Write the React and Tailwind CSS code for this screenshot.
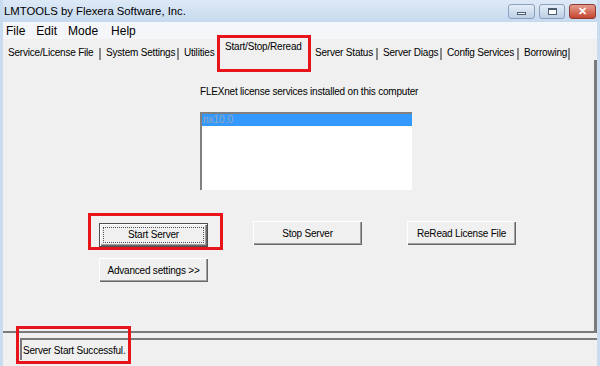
import React from "react";

const tabs = [
  { label: "Service/License File", w: "w-[98px]" },
  { label: "System Settings", w: "w-[78px]" },
  { label: "Utilities", w: "w-[40px]" },
  { label: "Start/Stop/Reread", w: "w-[91px]", active: true },
  { label: "Server Status", w: "w-[68px]" },
  { label: "Server Diags", w: "w-[64px]" },
  { label: "Config Services", w: "w-[77px]" },
  { label: "Borrowing", w: "w-[51px]" },
];

const WinButton = ({ children, focus }) => (
  <button
    className={
      "relative h-[24px] w-[109px] bg-[#f0f0f0] text-[10px] tracking-[-0.2px] text-black " +
      (focus
        ? "border border-[#505050] shadow-[inset_1px_1px_0_#fff,inset_-1px_-1px_0_#696969,inset_-2px_-2px_0_#a0a0a0]"
        : "shadow-[inset_1px_1px_0_#fff,inset_-1px_-1px_0_#696969,inset_-2px_-2px_0_#a0a0a0]")
    }
  >
    {focus && <span className="absolute inset-[3px] border border-dotted border-[#555]" />}
    <span className="relative">{children}</span>
  </button>
);

const RedBox = ({ className }) => (
  <span className={"pointer-events-none absolute border-[3px] border-[#e8141c] " + className} />
);

export default function App() {
  return (
    <div className="flex h-[366px] w-[600px] flex-col overflow-hidden border-x-[3px] border-[#c9dbef] bg-[#f0f0f0] font-['Liberation_Sans',Arial,sans-serif] text-black">
      {/* title bar */}
      <div className="flex h-[22px] items-center justify-between bg-gradient-to-b from-[#dde9f6] to-[#c6d9ee] pl-[1px] pr-[1px]">
        <span className="text-[11.3px]">LMTOOLS by Flexera Software, Inc.</span>
        <div className="flex items-start gap-[4px] pt-[1px]">
          <div className="flex h-[15px] w-[27px] items-center justify-center rounded-[3px] border border-[#8aa0bb] bg-gradient-to-b from-[#e4edf7] to-[#bdd0e6]">
            <span className="mt-[4px] h-[3px] w-[9px] border border-[#4d5d70] bg-white" />
          </div>
          <div className="flex h-[15px] w-[26px] items-center justify-center rounded-[3px] border border-[#8aa0bb] bg-gradient-to-b from-[#e4edf7] to-[#bdd0e6]">
            <span className="h-[7px] w-[9px] border border-[#4d5d70] border-t-2 bg-white" />
          </div>
          <div className="flex h-[15px] w-[27px] items-center justify-center rounded-[3px] border border-[#8c3a32] bg-gradient-to-b from-[#e59b8d] to-[#c4452f] text-[11px] font-bold leading-none text-white">
            ✕
          </div>
        </div>
      </div>

      {/* menu bar */}
      <div className="flex h-[17px] items-center gap-[11px] bg-[#f4f6f9] pl-[3px] text-[12px]">
        <span>File</span>
        <span>Edit</span>
        <span>Mode</span>
        <span className="ml-[2px]">Help</span>
      </div>

      {/* tabs */}
      <div className="flex h-[21px] items-end pl-[1px] pt-[2px] text-[10px] tracking-[-0.2px]">
        {tabs.map((t) => (
          <div key={t.label} className={"relative flex h-full items-center whitespace-nowrap pl-[4px] " + t.w}>
            {t.active ? (
              <>
                <span className="-mt-[8px] pl-[1px]">{t.label}</span>
                <RedBox className="-left-[3px] -top-[6px] h-[37px] w-[94px]" />
              </>
            ) : (
              <>
                <span className="mt-[3px]">{t.label}</span>
                <span className="absolute right-[1px] top-[7px] h-[12px] w-[2px] bg-[#8a8a8a]" />
              </>
            )}
          </div>
        ))}
      </div>

      {/* panel */}
      <div className="flex h-[273px] flex-col items-start border-b-2 border-r-[3px] border-[#7a7a7a] pl-[96px]">
        <div className="ml-[101px] mt-[24px] text-[10px] tracking-[-0.2px]">FLEXnet license services installed on this computer</div>
        <div className="ml-[101px] mt-[13px] h-[78px] w-[212px] border-l-2 border-t-2 border-[#808080] bg-white">
          <div className="h-[12px] bg-[#3399ff] pl-[1px] text-[10px] leading-[12px] text-[#9aa6b2]">nx10.0</div>
        </div>

        <div className="mt-[31px] flex gap-[45px]">
          <div className="relative">
            <WinButton focus>Start Server</WinButton>
            <RedBox className="-left-[11px] -top-[8px] h-[37px] w-[135px]" />
          </div>
          <WinButton>Stop Server</WinButton>
          <WinButton>ReRead License File</WinButton>
        </div>

        <div className="mt-[10px]">
          <WinButton>Advanced settings &gt;&gt;</WinButton>
        </div>
      </div>

      {/* status bar */}
      <div className="flex flex-1 pl-[17px] pt-[5px]">
        <div className="relative flex h-[22px] flex-1 items-center border-l-2 border-t-2 border-[#7a7a7a] pl-[1px] text-[10px] tracking-[-0.2px]">
          Server Start Successful.
          <RedBox className="-left-[6px] -top-[14px] h-[38px] w-[115px]" />
        </div>
      </div>
    </div>
  );
}
